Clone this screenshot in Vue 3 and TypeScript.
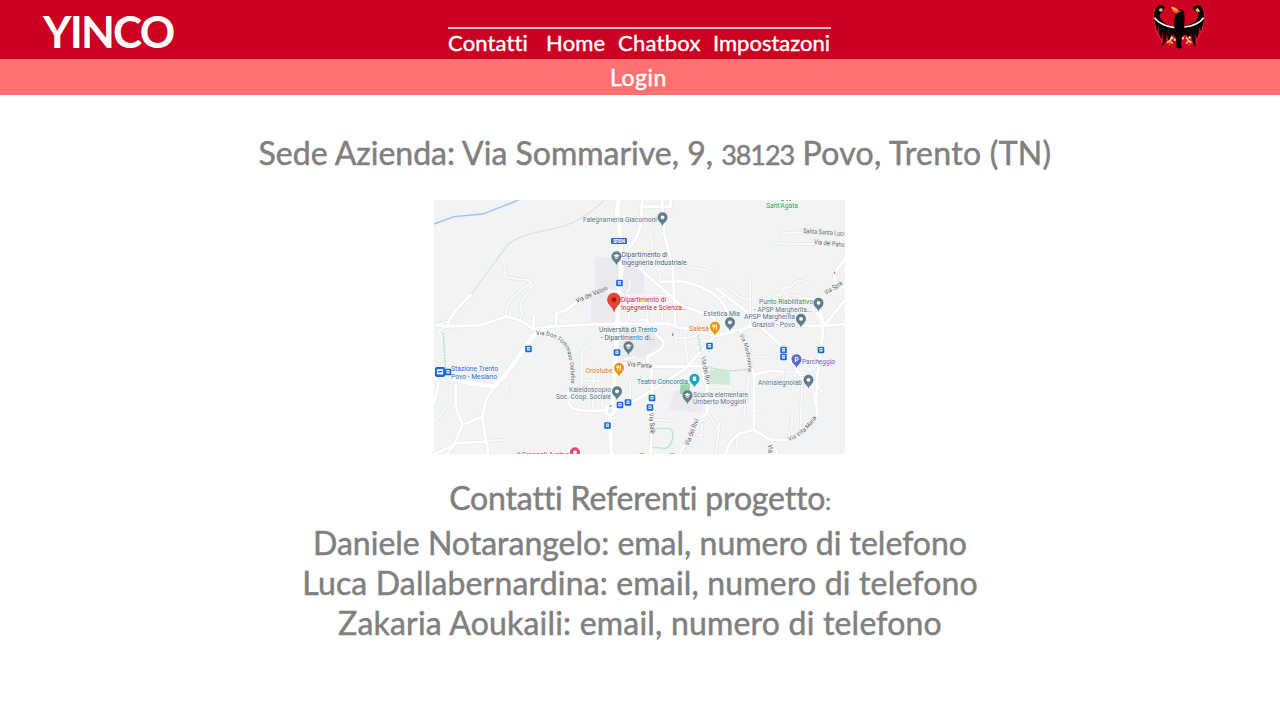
<script setup lang="ts">
interface Label { x: number; y: number; t: string; w: number; c?: string; r?: number }
interface Pin { x: number; y: number; c: string; k: string }

const nav = [
  { label: 'Contatti', cls: 'n1' },
  { label: 'Home', cls: 'n2' },
  { label: 'Chatbox', cls: 'n3' },
  { label: 'Impostazoni', cls: 'n4' },
]

const people = [
  { text: 'Daniele Notarangelo: emal, numero di telefono', cls: 'p1' },
  { text: 'Luca Dallabernardina: email, numero di telefono', cls: 'p2' },
  { text: 'Zakaria Aoukaili: email, numero di telefono', cls: 'p3' },
]

// Street geometry is drawn at three units per pixel.
const minor: string[] = [
  'M213 205Q208 225 220 233L280 240Q298 248 292 262L262 305Q256 318 264 340L260 355',
  'M288 252Q245 275 218 318L216 348',
  'M588 244Q592 262 578 276M575 285L585 285L585 350Q583 368 565 372M590 318L608 318L608 345',
  'M648 95L656 150L676 220L678 245M640 283L720 290M640 283L640 368L710 368M684 290L684 365',
  'M610 200L628 205M728 200Q745 190 765 202Q800 204 840 220',
  'M1042 100L1105 97M1014 130L1140 132',
  'M882 263L915 290L948 300M948 240L948 372',
  'M1015 300Q1020 280 1040 285Q1045 258 1070 262Q1085 235 1110 245L1122 252M1070 285L1100 290',
  'M443 595L443 470Q445 445 460 436M480 500L476 625M443 540L505 545L505 625',
  'M588 545L588 600M650 505L650 560M555 480L580 475L605 472',
  'M758 378L752 410L762 498M725 395L725 430M725 412Q760 420 790 405M700 362L700 395',
  'M820 560L890 560L892 600M890 578L930 580M945 530L930 645',
  'M1045 515L1050 560M1083 520L1083 545M1105 525L1100 690M1135 520L1140 610M965 470L1010 470M960 632L985 632',
  'M1075 640L1072 690M1135 540L1165 575M1160 475L1190 480M1030 430L1035 440M1055 515L1120 518',
  'M825 645L855 690L845 762M805 670L800 725M790 705L805 705M855 670L850 730M912 700L905 762',
  'M660 660L718 662M40 365L0 375M155 722L205 720',
  'M215 560L220 575M30 380L10 400M50 555L50 610L0 665',
]

const roads: string[] = [
  'M40 380L70 378L140 376L215 350Q260 355 298 388L350 380L480 373L550 372M560 372L700 372Q725 374 730 383L760 385L842 408L900 395L948 380L1050 376L1160 378L1233 372',
  'M366 375L368 338L395 332L430 305M520 272L548 275',
  'M625 0L620 75Q615 110 580 150L562 175M620 20L710 20M710 0L708 20',
  'M684 0L690 100L716 200L724 370M610 200L735 310Q750 322 830 345Q845 355 842 370',
  'M678 245L750 245Q815 260 848 290Q872 310 880 340M848 267L950 345',
  'M40 375Q50 345 85 310L110 285M298 388L300 350',
  'M180 560L155 600L145 650L85 675L60 735L40 762M65 555L65 620L85 675M145 650L155 722M60 730L150 725Q165 722 160 762M60 735L0 762',
  'M412 560Q400 575 402 605Q410 630 445 632L515 632M540 630L625 590L755 505L838 412M550 490L590 490M655 500L758 500',
  'M640 500L640 470Q690 448 690 425L660 395M618 360L640 360',
  'M652 500L655 600L650 762M762 498L800 498L810 540L820 560L820 640L790 660L738 762',
  'M920 395L945 450L950 500L960 525L960 690L1010 720L1060 720M1147 650Q1152 630 1146 612L1150 530L1160 450L1168 380L1233 300',
  'M985 385L1035 430L1115 550M1168 378L1150 340L1150 320M960 525Q1000 510 1045 515',
  'M960 690L920 700Q885 715 875 762M1010 720L1030 762M880 390L920 392L945 378',
  'M1233 175L1215 200Q1190 230 1210 255L1233 262M1100 295L1150 300L1170 375',
  'M0 530L15 545L0 610M0 375L40 380',
]

const mainRoads = 'M555 0Q545 40 555 75L560 130L562 200L556 270L550 370L545 480L535 610L528 650L532 762M50 535L110 550L180 560L210 530L250 475L300 405L345 380'

const labels: Label[] = [
  { x: 766, y: 208, t: "Sant'Agata", w: 32, c: '#249b43' },
  { x: 583, y: 222, t: 'Falegnameria Giacomoni', w: 74 },
  { x: 621.5, y: 257, t: 'Dipartimento di', w: 46, c: '#435d69' },
  { x: 621.5, y: 264.7, t: 'Ingegneria Industriale', w: 65, c: '#435d69' },
  { x: 621, y: 302, t: 'Dipartimento di', w: 45, c: '#c5221f' },
  { x: 621, y: 309.5, t: 'Ingegneria e Scienza...', w: 66, c: '#c5221f' },
  { x: 599, y: 332, t: 'Università di Trento', w: 58, c: '#435d69' },
  { x: 601, y: 339.5, t: '- Dipartimento di...', w: 54, c: '#435d69' },
  { x: 703.5, y: 315.7, t: 'Estetica Mia', w: 36.5 },
  { x: 759, y: 304, t: 'Punto Riabilitativo', w: 54 },
  { x: 754, y: 311.5, t: '- APSP Margherita...', w: 58 },
  { x: 744, y: 319.3, t: 'APSP Margherita', w: 51 },
  { x: 752, y: 326.8, t: 'Grazioli - Povo', w: 43 },
  { x: 689, y: 331, t: 'Salesà', w: 20, c: '#e37400' },
  { x: 585.5, y: 372.7, t: 'Orostube', w: 27, c: '#e37400' },
  { x: 637, y: 383.5, t: 'Teatro Concordia', w: 51, c: '#128087' },
  { x: 693, y: 396.5, t: 'Scuola elementare', w: 55 },
  { x: 693, y: 404, t: 'Umberto Moggioli', w: 53 },
  { x: 569, y: 391.7, t: 'Kaleidoscopio', w: 42 },
  { x: 556, y: 399, t: 'Soc. Coop. Sociale', w: 55 },
  { x: 758, y: 384.5, t: 'Animalegnolab', w: 44 },
  { x: 802, y: 363.7, t: 'Parcheggio', w: 33, c: '#5059b9' },
  { x: 451, y: 371, t: 'Stazione Trento', w: 47, c: '#1967d2' },
  { x: 451, y: 378.5, t: 'Povo - Mesiano', w: 46, c: '#1967d2' },
  { x: 517, y: 457, t: 'Il Grappoli Agritur', w: 52, c: '#d81b60' },
  { x: 803, y: 233, t: 'Salita Santa Luci', w: 41.5, c: '#555', r: 4 },
  { x: 814, y: 244, t: 'Via dei Paho', w: 30.5, c: '#555', r: 6 },
  { x: 826, y: 295, t: 'Via Sprè', w: 20, c: '#555', r: -32 },
  { x: 577, y: 303, t: 'Via dei Valoni', w: 34, c: '#555', r: -23 },
  { x: 627, y: 366, t: 'Via Pante', w: 25, c: '#555', r: 5 },
  { x: 649, y: 413, t: 'Via Salè', w: 21, c: '#555', r: 86 },
  { x: 701, y: 357, t: 'Via dei Rivi', w: 28, c: '#555', r: 79 },
  { x: 688.5, y: 446, t: 'Via dei Rivi', w: 28, c: '#555', r: -68 },
  { x: 768, y: 444.5, t: 'Via', w: 8.5, c: '#555', r: 86 },
]

const pins: Pin[] = [
  { x: 662.5, y: 218, c: '#607d8b', k: 'dot' },
  { x: 616.5, y: 257, c: '#607d8b', k: 'school' },
  { x: 628.5, y: 347, c: '#607d8b', k: 'school' },
  { x: 730, y: 323, c: '#607d8b', k: 'dot' },
  { x: 818.5, y: 303.5, c: '#607d8b', k: 'dot' },
  { x: 801, y: 319.5, c: '#607d8b', k: 'dot' },
  { x: 715, y: 327.5, c: '#f09300', k: 'food' },
  { x: 619, y: 368.5, c: '#f09300', k: 'food' },
  { x: 694.5, y: 379.5, c: '#12a9b8', k: 'ticket' },
  { x: 617, y: 392, c: '#607d8b', k: 'dot' },
  { x: 687.5, y: 396, c: '#607d8b', k: 'school' },
  { x: 808.5, y: 380.5, c: '#607d8b', k: 'dot' },
  { x: 796.5, y: 360, c: '#5c6bc0', k: 'park' },
  { x: 575, y: 453, c: '#e54879', k: 'dot' },
]

const stops: number[][] = [
  [619.5, 283], [528.5, 349], [617, 352.5], [709.5, 346], [783.5, 350], [783.5, 357],
  [821, 350], [652, 398], [650, 407.5], [628, 402.5], [620, 405], [607.5, 425.5], [448, 372],
]
</script>

<template>
  <div class="page">
    <header class="top">
      <div class="brand">YINCO</div>
      <nav class="nav">
        <a v-for="n in nav" :key="n.label" :class="n.cls">{{ n.label }}</a>
      </nav>
      <svg class="eagle" viewBox="36 10 168 140">
        <g fill="none" stroke="#e98a72" stroke-width="3" opacity=".35">
          <path d="M50 20Q36 38 44 66L50 100L64 120L68 142M184 20Q198 38 190 66L184 100L170 120L166 142" />
        </g>
        <g fill="#050304">
          <path d="M75 23Q66 14 55 18Q43 25 42 50Q43 70 48 80L51 96L55 80L59 108L64 116L67 98L70 122L64 142L76 128L79 102L87 124L99 103L108 116L110 136L106 145L117 142L127 145L123 133L125 115L132 103L146 124L153 102L159 130L167 142L166 117L164 98L171 116L175 105L178 81L184 95L187 78Q195 59 191 38Q187 18 175 17Q164 16 158 25L163 33L174 37Q179 46 169 61Q153 79 132 78L134 58Q134 30 123 28Q111 27 108 39L101 68L104 79Q79 81 63 59Q53 44 65 39Z" />
          <path d="M109 99L112 143L117 148L122 143L125 99Z" />
        </g>
        <path d="M43 54Q61 77 103 84M191 54Q173 78 133 82" fill="none" stroke="#fff5ec" stroke-width="5" />
        <path d="M94 21Q110 21 120 35L110 42L97 34Z" fill="#ff5b1c" />
        <path d="M95 23L111 32" stroke="#ffd078" stroke-width="4" />
        <path d="M58 28L64 25L69 31L63 37L57 33ZM171 25L177 29L180 36L171 37L166 31Z" fill="#e5bd48" />
        <g fill="none" stroke="#ef3822" stroke-width="6">
          <path d="M97 108L90 122L78 132M88 121L99 133M89 124L88 138M136 107L147 124L158 131M147 123L137 133M147 124L149 138M101 113L106 123M132 111L127 121" />
        </g>
        <g fill="none" stroke="#ffd27a" stroke-width="4">
          <path d="M96 113L91 122L81 128M91 126L98 131M139 114L146 123L154 128M144 126L138 131" />
        </g>
        <path d="M93 111L98 117M103 117L105 123M130 113L127 118M146 111L151 116" stroke="#fff" stroke-width="5" />
        <path d="M119 34L123 36" stroke="#d65b4c" stroke-width="3" />
      </svg>
    </header>
    <div class="sub"><a>Login</a></div>
    <main class="content">
      <h1 class="address"><span>Sede Azienda: Via Sommarive, 9, </span><span class="old">38123</span><span class="city"> Povo, Trento (TN)</span></h1>
      <svg class="map" viewBox="434 200 411 254">
        <rect x="434" y="200" width="411" height="254" fill="#f1f3f4" />
        <g transform="translate(434 200) scale(.33333)">
          <path d="M483 170L632 175L630 280L560 282L545 365L470 365L472 275L483 270ZM555 390L660 392L690 425L640 470L560 480ZM722 570L808 575L805 635L770 635L705 628Z" fill="#e8eaed" />
          <path d="M828 508L888 516L887 555L825 550ZM740 548L768 550L765 585L738 582Z" fill="#ceead6" />
          <path d="M740 548L768 550L765 585L738 582Z" fill="#9ad4ac" />
          <path d="M0 72L60 50L146 42L255 0" fill="none" stroke="#9dc0f9" stroke-width="4" />
          <path d="M110 285L220 135Q245 110 330 92Q440 75 510 0" fill="none" stroke="#dcdee0" stroke-width="3.5" />
          <g fill="none" stroke-linejoin="round" stroke-linecap="round">
            <path v-for="d in minor" :key="'a' + d" :d="d" stroke="#e1e3e6" stroke-width="10" />
            <path v-for="d in roads" :key="'b' + d" :d="d" stroke="#e3e5e7" stroke-width="11.5" />
            <path :d="mainRoads" stroke="#e3e5e7" stroke-width="17" />
            <path v-for="d in minor" :key="'c' + d" :d="d" stroke="#f9fafa" stroke-width="6.5" />
            <path v-for="d in roads" :key="'d' + d" :d="d" stroke="#fff" stroke-width="8.5" />
            <path :d="mainRoads" stroke="#fff" stroke-width="14" />
            <circle cx="528" cy="632" r="12" stroke="#fff" stroke-width="9" fill="#e7e9eb" />
          </g>
          <path d="M665 685L708 686Q720 695 716 715Q710 745 690 745L657 742" fill="none" stroke="#bfe3c9" stroke-width="4" />
          <path d="M28 400L35 515M792 405L801 455M822 500Q880 520 940 507" fill="none" stroke="#a6d7b5" stroke-width="3.5" stroke-dasharray="6 3" />
          <path d="M716 400L716 408M1202 215L1202 222M526 620L534 617" stroke="#8f8ac7" stroke-width="4" />
          <path d="M617 761h13M708 761h14" stroke="#e0a040" stroke-width="3" />
        </g>
        <path d="M781 200.3h3M786 200.3h2M789 200.3h2" stroke="#249b43" stroke-width=".8" />
        <g class="labels">
          <text
            v-for="l in labels" :key="l.t + l.x" :x="l.x" :y="l.y" :fill="l.c || '#56707e'"
            :textLength="l.w" lengthAdjust="spacingAndGlyphs"
            :transform="l.r ? `rotate(${l.r} ${l.x} ${l.y})` : undefined"
          >{{ l.t }}</text>
          <path id="don" d="M536 335Q558 334 566 349Q571 360 571 384" fill="none" stroke="none" />
          <text class="curve" fill="#555"><textPath href="#don">Via Don Tommaso Dallafior</textPath></text>
          <path id="mad" d="M739 335Q749 350 748 378" fill="none" stroke="none" />
          <text class="curve" fill="#555"><textPath href="#mad">Via Madonnina</textPath></text>
          <path id="vil" d="M789 441Q807 435 820 412" fill="none" stroke="none" />
          <text class="curve" fill="#555"><textPath href="#vil">Via Villa Maria</textPath></text>
        </g>
        <rect x="611" y="238" width="16" height="6" rx="1" fill="#3368b8" />
        <text class="shield" x="613" y="243" textLength="12">SP204</text>
        <g v-for="s in stops" :key="s.join()" :transform="`translate(${s[0]} ${s[1]})`">
          <rect x="-3.3" y="-3.3" width="6.6" height="6.6" rx="1.2" fill="#1a67db" />
          <rect x="-1.6" y="-2" width="3.2" height="3.6" rx=".6" fill="#e8f0fe" />
          <path d="M-1.1-.3h2.2" stroke="#1a67db" stroke-width=".8" />
        </g>
        <rect x="435" y="367" width="10" height="10" rx="1.8" fill="#1a67db" />
        <path d="M437.3 369.4h5.4v4.6h-5.4zM438 374v1M442 374v1" fill="#fff" stroke="#fff" stroke-width=".6" />
        <path d="M438 371.7h4" stroke="#1a67db" stroke-width="1.3" />
        <g v-for="p in pins" :key="p.x + '-' + p.y" :transform="`translate(${p.x} ${p.y})`">
          <path d="M0 8.3C-.8 4.5-5 3.7-5-.7A5 5 0 0 1 5-.7C5 3.7.8 4.5 0 8.3Z" :fill="p.c" />
          <circle v-if="p.k === 'dot'" cy="-.7" r="1.9" fill="#fff" />
          <path v-else-if="p.k === 'school'" d="M-3.2-1.3L0-2.9L3.2-1.3L0 .2ZM-1.9.1L0 1L1.9.1V1.1L0 2.1L-1.9 1.1Z" fill="#fff" />
          <path v-else-if="p.k === 'food'" d="M-1.3-3V2.4M-2.2-3V-.6H-.4V-3M1.5 2.4V-3Q.5-2 1 0" fill="none" stroke="#fff" stroke-width=".8" />
          <rect v-else-if="p.k === 'ticket'" x="-1.7" y="-3" width="3.4" height="4.6" rx=".5" fill="#fff" />
          <path v-else d="M-1.1 2V-2.7H.4A1.4 1.4 0 0 1 .4.2H-1" fill="none" stroke="#fff" stroke-width="1" />
        </g>
        <path d="M614 311.5C612.5 306 607.5 305 607.5 299.5A6.5 6.5 0 0 1 620.5 299.5C620.5 305 615.5 306 614 311.5Z" fill="#ea4335" stroke="#c5221f" stroke-width=".5" />
        <circle cx="614" cy="299.7" r="2.3" fill="#a11410" />
      </svg>
      <h2 class="refs"><span>Contatti Referenti progetto</span><small>:</small></h2>
      <p v-for="p in people" :key="p.text" class="person"><span :class="p.cls">{{ p.text }}</span></p>
    </main>
  </div>
</template>

<style>
body { margin: 0; background: #fff; }
</style>

<style scoped>
.page { width: 1280px; height: 720px; overflow: hidden; background: #fff; font-family: "Berlin Sans FB", Lato, "Open Sans", sans-serif; font-weight: 400; color: #808080; font-variant-ligatures: none; }
.top { display: flex; height: 59px; background: #cc0020; color: #fff; box-sizing: border-box; padding-left: 43px; }
.brand { width: 405px; font-size: 44px; line-height: 62px; font-weight: 700; letter-spacing: -1.8px; flex: none; }
.nav { display: grid; grid-template-columns: 98px 72px 95px 118px; width: 383px; height: 30px; margin-top: 27px; border-top: 2px solid #f3c4cc; box-sizing: border-box; font-size: 22px; line-height: 27px; white-space: nowrap; flex: none; -webkit-text-stroke: .4px #fff; }
.eagle { width: 56px; height: 46.7px; margin: 3px 0 0 321px; flex: none; }
.n1 { letter-spacing: .15px; }
.n2 { letter-spacing: .2px; }
.n3 { letter-spacing: .25px; }
.sub { height: 36px; background: #ff7171; color: #fff; display: flex; justify-content: center; font-size: 23px; line-height: 36px; padding-right: 3px; box-sizing: border-box; letter-spacing: .5px; -webkit-text-stroke: .4px #fff; }
.content { display: flex; flex-direction: column; align-items: center; }
h1, h2, p { margin: 0; font-weight: 400; font-size: 32px; white-space: pre; -webkit-text-stroke: .5px #808080; }
.address { margin: 38px 0 0 30px; height: 40px; line-height: 40px; }
.old { font-size: 27px; letter-spacing: -1.1px; }
.city { letter-spacing: .3px; }
.map { display: block; width: 411px; height: 254px; margin: 27px 1px 0 0; }
.labels { font-family: Roboto, sans-serif; font-size: 6.8px; paint-order: stroke; stroke: #fff; stroke-width: .7px; }
.curve { font-size: 5.8px; }
.shield { font-family: Roboto, sans-serif; font-size: 5px; font-weight: 700; fill: #fff; }
.refs { margin-top: 24px; height: 40px; line-height: 40px; letter-spacing: -.15px; }
.refs small { font-size: 23px; }
.person { height: 40px; line-height: 40px; }
.p2 { letter-spacing: .17px; }
.p3 { letter-spacing: .2px; }
.refs + .person { margin-top: 5px; }
</style>
